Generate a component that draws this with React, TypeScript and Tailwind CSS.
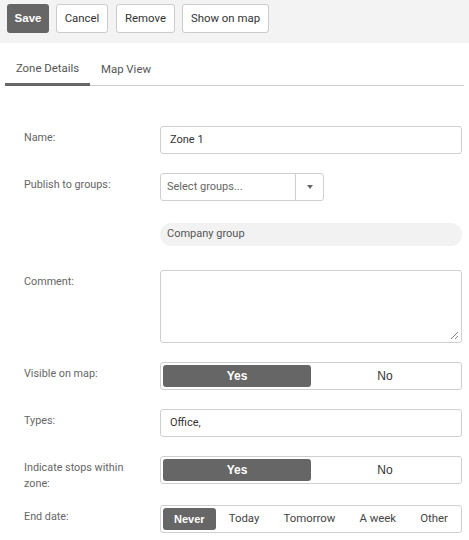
import React from "react";

function Toggle({ on = true }: { on?: boolean }) {
  return (
    <div className="flex h-[28px] rounded-[3px] border border-[#cfcfcf] p-[2px] font-['Liberation_Sans',Arial,sans-serif] text-[12px]">
      <div className={`flex flex-1 items-center justify-center rounded-[3px] ${on ? "bg-[#666666] font-bold text-white" : "text-[#333]"}`}>Yes</div>
      <div className={`flex flex-1 items-center justify-center rounded-[3px] ${!on ? "bg-[#666666] font-bold text-white" : "text-[#333]"}`}>No</div>
    </div>
  );
}

function Row({ label, children, className = "" }: { label: React.ReactNode; children: React.ReactNode; className?: string }) {
  return (
    <div className={`flex items-start ${className}`}>
      <div className="h-0 w-[136px] shrink-0 overflow-visible pt-[4px] text-[10.8px] leading-[16px] text-[#666]">{label}</div>
      <div className="flex-1">{children}</div>
    </div>
  );
}

export default function App() {
  const ends = ["Never", "Today", "Tomorrow", "A week", "Other"];
  return (
    <div className="h-[540px] w-[469px] overflow-hidden bg-white font-['Roboto',sans-serif]">
      <div className="flex h-[43px] gap-[7px] bg-[#f3f3f3] px-[7px] pt-[4px] text-[11.4px]">
        <button className="h-[29px] w-[42px] rounded-[3px] bg-[#666666] font-['Liberation_Sans',Arial,sans-serif] text-[11.5px] font-bold text-white">Save</button>
        <button className="h-[29px] w-[52px] rounded-[3px] border border-[#cccccc] bg-white text-[#333]">Cancel</button>
        <button className="ml-px h-[29px] w-[59px] rounded-[3px] border border-[#cccccc] bg-white text-[#333]">Remove</button>
        <button className="h-[29px] w-[87px] rounded-[3px] border border-[#cccccc] bg-white text-[#333]">Show on map</button>
      </div>

      <div className="mx-[5px] flex h-[43px] border-b border-[#cccccc] text-[11.4px] text-[#555]">
        <div className="-mb-px flex w-[85px] items-center justify-center border-b-[3px] border-[#666666] pt-[11px]">Zone Details</div>
        <div className="flex items-center px-[11px] pt-[11px]">Map View</div>
      </div>

      <div className="pl-[24px] pr-[7px] pt-[40px] text-[11px]">
        <Row label="Name:">
          <div className="flex h-[28px] items-center rounded-[3px] border border-[#cfcfcf] px-[9px] text-[#333]">Zone 1</div>
        </Row>

        <Row label="Publish to groups:" className="mt-[19px]">
          <div className="flex h-[28px] w-[164px] rounded-[3px] border border-[#cfcfcf]">
            <div className="flex flex-1 items-center px-[6px] text-[#666]">Select groups...</div>
            <div className="flex w-[28px] items-center justify-center border-l border-[#cfcfcf]">
              <svg width="6" height="4" viewBox="0 0 6 4"><path d="M0 0h6L3 4z" fill="#666" /></svg>
            </div>
          </div>
        </Row>

        <Row label="" className="mt-[22px]">
          <div className="flex h-[23px] items-center rounded-full bg-[#f2f2f2] px-[7px] text-[#555]">Company group</div>
        </Row>

        <Row label="Comment:" className="mt-[24px]">
          <div className="relative h-[73px] rounded-[3px] border border-[#cfcfcf]">
            <svg className="absolute bottom-[2px] right-[2px]" width="9" height="9" viewBox="0 0 9 9">
              <path d="M8 1L1 8M8 5L5 8" stroke="#888" strokeWidth="1" />
            </svg>
          </div>
        </Row>

        <Row label="Visible on map:" className="mt-[19px]">
          <Toggle />
        </Row>

        <Row label="Types:" className="mt-[19px]">
          <div className="flex h-[28px] items-center rounded-[3px] border border-[#cfcfcf] px-[9px] text-[#333]">Office,</div>
        </Row>

        <Row label={<>Indicate stops within<br />zone:</>} className="mt-[19px]">
          <Toggle />
        </Row>

        <Row label="End date:" className="mt-[21px]">
          <div className="flex h-[28px] justify-between rounded-[3px] border border-[#cfcfcf] p-[2px] text-[11.4px]">
            {ends.map((e, i) => (
              <div
                key={e}
                className={`flex items-center whitespace-nowrap rounded-[3px] px-[11px] ${i === 0 ? "bg-[#666666] font-['Liberation_Sans',Arial,sans-serif] text-[11px] font-bold text-white" : "text-[#444]"}`}
              >
                {e}
              </div>
            ))}
          </div>
        </Row>
      </div>
    </div>
  );
}
